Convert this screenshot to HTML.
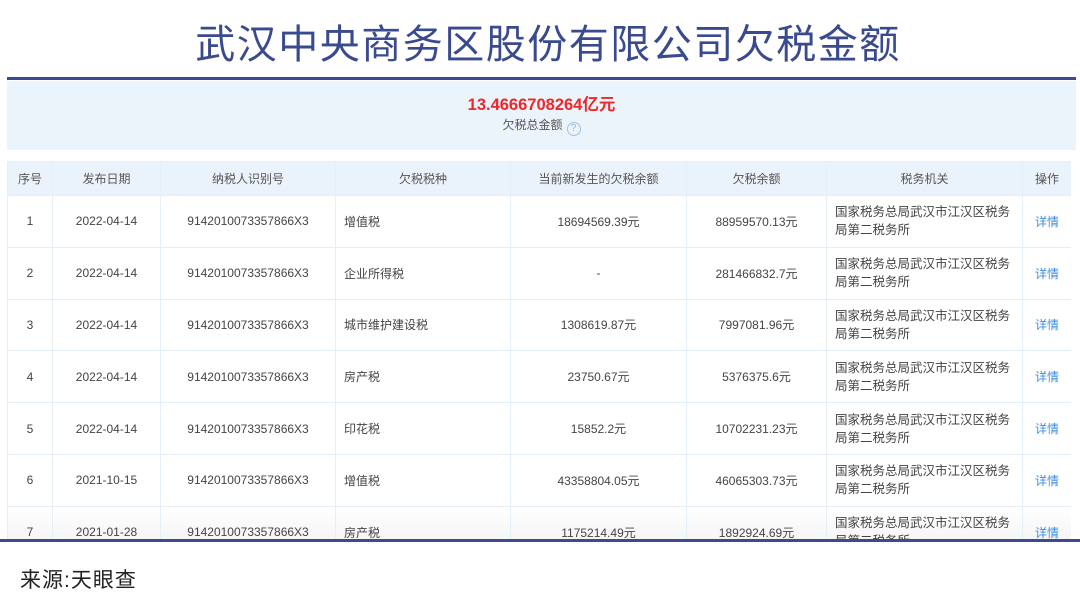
<!DOCTYPE html>
<html><head><meta charset="utf-8">
<style>
*{margin:0;padding:0;box-sizing:border-box}
body{width:1080px;height:608px;background:#fff;position:relative;overflow:hidden;font-family:"Liberation Sans","Noto Sans CJK SC",sans-serif;}
.title{position:absolute;top:20px;left:0;width:1080px;text-align:center;font-size:40px;letter-spacing:1.5px;color:#3a4a8e;line-height:50px;padding-left:16px}
.line1{position:absolute;left:7px;top:77px;width:1069px;height:3px;background:#3c4b8f}
.sum{position:absolute;left:7px;top:81px;width:1069px;height:69px;background:#ebf3fb;text-align:center}
.amt{position:absolute;top:10px;width:100%;font-size:16.5px;font-weight:bold;color:#f0272a}
.lab{position:absolute;top:35px;width:100%;font-size:12px;color:#555}
.q{display:inline-block;width:14px;height:14px;border:1px solid #9cc3e6;border-radius:50%;color:#8db8e0;font-size:10px;line-height:12px;text-align:center;vertical-align:-2px;margin-left:4px}
.tbl{position:absolute;left:7px;top:161px;width:1064px;height:378px;overflow:hidden}
table{border-collapse:collapse;width:1064px;table-layout:fixed;font-size:12px;color:#444}
td,th{border:1px solid #e6eef7;text-align:center;font-weight:normal;padding:0 6px}
th{height:34px;background:#eaf3fb;color:#555}
td{height:51.8px}
td.l{text-align:left;padding-left:8px}
td.a{text-align:left;line-height:18px;font-size:12.5px;padding-left:8px;padding-right:10px}
td.d{color:#3b8de0}
tr.last td{background:linear-gradient(#fff,#f0f0f0)}
.line2{position:absolute;left:0;top:539px;width:1080px;height:3px;background:#3c4b8f}
.src{position:absolute;left:20px;top:564px;font-size:21px;letter-spacing:1px;color:#222}
</style></head><body>
<div class="title">武汉中央商务区股份有限公司欠税金额</div>
<div class="line1"></div>
<div class="sum"><div class="amt">13.4666708264亿元</div><div class="lab">欠税总金额<span class="q">?</span></div></div>
<div class="tbl"><table>
<colgroup><col style="width:45px"><col style="width:108px"><col style="width:175px"><col style="width:175px"><col style="width:176px"><col style="width:140px"><col style="width:196px"><col style="width:49px"></colgroup>
<tr><th>序号</th><th>发布日期</th><th>纳税人识别号</th><th>欠税税种</th><th>当前新发生的欠税余额</th><th>欠税余额</th><th>税务机关</th><th>操作</th></tr>
<tr><td>1</td><td>2022-04-14</td><td>9142010073357866X3</td><td class="l">增值税</td><td>18694569.39元</td><td>88959570.13元</td><td class="a">国家税务总局武汉市江汉区税务局第二税务所</td><td class="d">详情</td></tr>
<tr><td>2</td><td>2022-04-14</td><td>9142010073357866X3</td><td class="l">企业所得税</td><td>-</td><td>281466832.7元</td><td class="a">国家税务总局武汉市江汉区税务局第二税务所</td><td class="d">详情</td></tr>
<tr><td>3</td><td>2022-04-14</td><td>9142010073357866X3</td><td class="l">城市维护建设税</td><td>1308619.87元</td><td>7997081.96元</td><td class="a">国家税务总局武汉市江汉区税务局第二税务所</td><td class="d">详情</td></tr>
<tr><td>4</td><td>2022-04-14</td><td>9142010073357866X3</td><td class="l">房产税</td><td>23750.67元</td><td>5376375.6元</td><td class="a">国家税务总局武汉市江汉区税务局第二税务所</td><td class="d">详情</td></tr>
<tr><td>5</td><td>2022-04-14</td><td>9142010073357866X3</td><td class="l">印花税</td><td>15852.2元</td><td>10702231.23元</td><td class="a">国家税务总局武汉市江汉区税务局第二税务所</td><td class="d">详情</td></tr>
<tr><td>6</td><td>2021-10-15</td><td>9142010073357866X3</td><td class="l">增值税</td><td>43358804.05元</td><td>46065303.73元</td><td class="a">国家税务总局武汉市江汉区税务局第二税务所</td><td class="d">详情</td></tr>
<tr class="last"><td>7</td><td>2021-01-28</td><td>9142010073357866X3</td><td class="l">房产税</td><td>1175214.49元</td><td>1892924.69元</td><td class="a">国家税务总局武汉市江汉区税务局第二税务所</td><td class="d">详情</td></tr>
</table></div>
<div class="line2"></div>
<div class="src">来源:天眼查</div>
</body></html>
